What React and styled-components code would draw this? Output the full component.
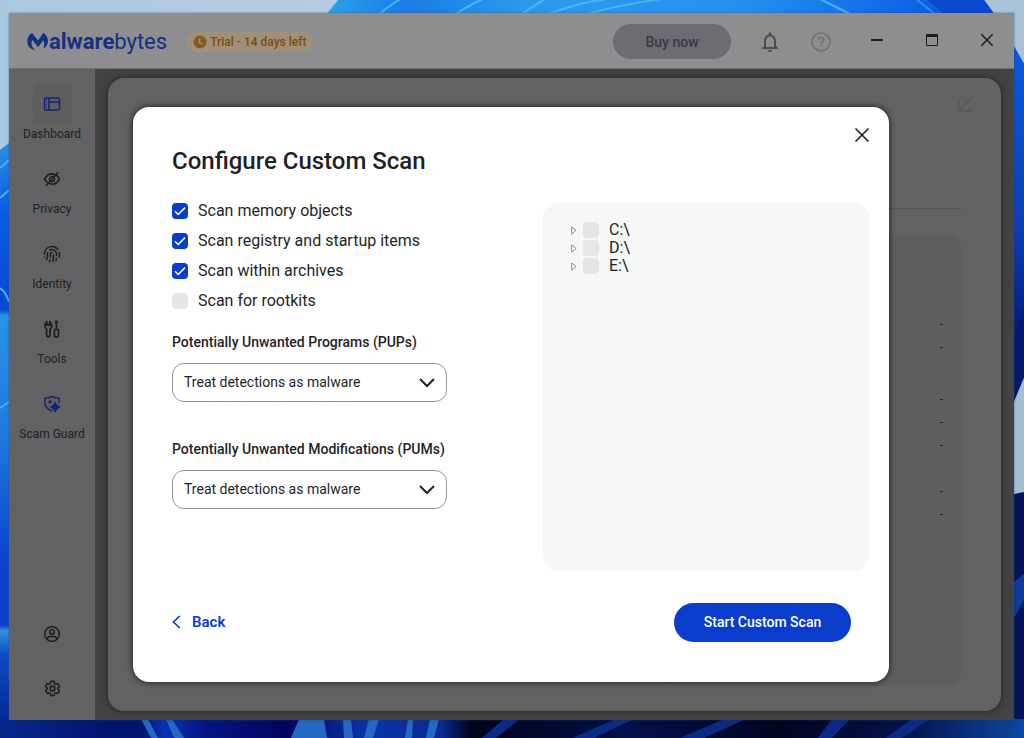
import { useState } from 'react';
import styled, { createGlobalStyle } from 'styled-components';
import { MdNotificationsNone } from 'react-icons/md';
import { HiOutlineCog6Tooth } from 'react-icons/hi2';
import { Fingerprint } from 'lucide-react';

const scanOptions = [
    { id: 'memory', label: 'Scan memory objects', checked: true },
    { id: 'registry', label: 'Scan registry and startup items', checked: true },
    { id: 'archives', label: 'Scan within archives', checked: true },
    { id: 'rootkits', label: 'Scan for rootkits', checked: false },
]

const drives = ['C:\\', 'D:\\', 'E:\\']

const summaryGroups = [['-', '-'], ['-', '-', '-'], ['-', '-']]

const Wallpaper = () => (
    <WallpaperSvg viewBox="0 0 1024 738" preserveAspectRatio="none" aria-hidden="true">
        <defs>
            <linearGradient id="sky" x1="0" y1="0" x2="1" y2="0">
                <stop offset="0" stopColor="#a9c9e2" />
                <stop offset="0.3" stopColor="#b4cbe0" />
                <stop offset="1" stopColor="#a9c2d8" />
            </linearGradient>
            <linearGradient id="bloom" x1="0" y1="0" x2="1" y2="0">
                <stop offset="0" stopColor="#2fa4ea" />
                <stop offset="0.12" stopColor="#1c7be4" />
                <stop offset="0.3" stopColor="#2b9bee" />
                <stop offset="0.6" stopColor="#2490ee" />
                <stop offset="0.85" stopColor="#0f62e8" />
                <stop offset="1" stopColor="#0a45c4" />
            </linearGradient>
            <linearGradient id="leftEdge" x1="0" y1="0" x2="0" y2="1">
                <stop offset="0" stopColor="#2b8fe8" />
                <stop offset="0.12" stopColor="#0a5be4" />
                <stop offset="0.28" stopColor="#0648d6" />
                <stop offset="0.29" stopColor="#2b93e4" />
                <stop offset="0.5" stopColor="#1c78e0" />
                <stop offset="0.7" stopColor="#0a44d0" />
                <stop offset="0.81" stopColor="#0840cc" />
                <stop offset="0.82" stopColor="#2f90da" />
                <stop offset="0.86" stopColor="#0c4cc8" />
                <stop offset="1" stopColor="#04208a" />
            </linearGradient>
            <linearGradient id="rightEdge" x1="0" y1="0" x2="0" y2="1">
                <stop offset="0" stopColor="#0b5ae0" />
                <stop offset="0.6" stopColor="#0a3db4" />
                <stop offset="1" stopColor="#02146c" />
            </linearGradient>
            <linearGradient id="floor" x1="0" y1="0" x2="1" y2="0">
                <stop offset="0" stopColor="#06288c" />
                <stop offset="0.1" stopColor="#021470" />
                <stop offset="0.14" stopColor="#021470" />
                <stop offset="0.16" stopColor="#0632b4" />
                <stop offset="0.2" stopColor="#031684" />
                <stop offset="0.28" stopColor="#02045c" />
                <stop offset="0.36" stopColor="#0a34a8" />
                <stop offset="0.43" stopColor="#0a2a92" />
                <stop offset="0.46" stopColor="#01041c" />
                <stop offset="0.62" stopColor="#02104a" />
                <stop offset="0.76" stopColor="#010420" />
                <stop offset="0.88" stopColor="#02124a" />
                <stop offset="1" stopColor="#0c48a0" />
            </linearGradient>
        </defs>
        <rect width="1024" height="738" fill="url(#sky)" />
        <path d="M322 20L338 0H984C996 16 1008 36 1024 64V340L1014 362V20Z" fill="url(#bloom)" />
        <g stroke="#4ab6f0" strokeWidth="2" fill="none">
            <path d="M375 18Q388 6 402 -2M450 18Q470 4 486 -2M515 18L545 -1M540 18Q570 4 606 -1M575 18Q610 6 662 -1" />
            <path d="M820 -1L858 18" />
        </g>
        <path d="M916 -1L940 18" stroke="#2c8cf0" strokeWidth="2" />
        <path d="M928 0H984L996 16H946Z" fill="#0a49cf" />
        <path d="M1014 46L1024 64V332L1014 360Z" fill="url(#rightEdge)" />
        <path d="M1014 335L1024 308V378L1014 402Z" fill="#021a6c" />
        <path d="M1014 402L1024 378V492H1014Z" fill="#a4bfd3" />
        <path d="M1014 494L1024 492V738H1014Z" fill="#03145a" />
        <path d="M1014 582L1024 574V600L1014 618Z" fill="#0c3ba0" />
        <path d="M0 150L9 143V738H0Z" fill="url(#leftEdge)" />
        <path d="M0 168L9 160M0 198L9 190M0 288Q6 292 9 302M0 408L9 402" stroke="#46b4f0" strokeWidth="2" fill="none" />
        <rect y="719" width="1024" height="19" fill="url(#floor)" />
        <g fill="#2468c2">
            <path d="M141 719H148L158 738H151ZM166 719H172L184 738H174Z" />
            <path d="M299 719H324L327 738H291ZM343 719H351L353 738H344ZM369 719H379L373 738H364ZM408 719H413L412 738H405ZM430 719H439L434 738H426Z" />
        </g>
        <path d="M504 719H520L496 738H482ZM616 719H634L594 738H572ZM724 719H746L704 738H680ZM832 719H850L832 738H818ZM912 719H930L902 738H886Z" fill="#0c2a84" />
    </WallpaperSvg>
)

const BrandMark = () => (
    <svg width="22" height="20" viewBox="0 0 22 20" fill="currentColor" aria-hidden="true">
        <path d="M5 .8C2 3 .3 6 .3 9.500c0 4.700 3.500 8 8.700 9-3-1.800-4.500-4.200-4.500-7 0-1.500.3-2.500 1-3.500l5.500 7.200 5.300-7c1.300 2.700 1.200 5.500.2 8.300 2.800-1.500 4.500-4.300 4.500-7.500C21 5.500 19 2.500 16.500.8L11 8.500z" />
    </svg>
)

const ClockIcon = () => (
    <svg width="14" height="14" viewBox="0 0 14 14" aria-hidden="true">
        <circle cx="7" cy="7" r="6.500" fill="#85591d" />
        <path d="M6.500 3.200v4.200l3 1.800" fill="none" stroke="#a39278" strokeWidth="1.500" />
    </svg>
)

const HelpIcon = () => (
    <svg width="20" height="20" viewBox="0 0 20 20" fill="none" stroke="currentColor" strokeWidth="1.500" aria-hidden="true">
        <circle cx="10" cy="10" r="9" />
        <path d="M7.400 8.100c0-1.500 1.100-2.500 2.600-2.500s2.600 1 2.600 2.400c0 1.900-2.500 2-2.500 4.100M10.100 13.300v1.700" />
    </svg>
)

const MinimizeIcon = () => (
    <svg width="14" height="14" viewBox="0 0 14 14" aria-hidden="true">
        <path d="M1 7h12" stroke="currentColor" strokeWidth="2" />
    </svg>
)

const MaximizeIcon = () => (
    <svg width="14" height="14" viewBox="0 0 14 14" fill="none" stroke="currentColor" aria-hidden="true">
        <path d="M1.500 2v10.500h11V2" />
        <path d="M1 2.500h12" strokeWidth="3" />
    </svg>
)

const CrossIcon = ({ size = 14 }) => (
    <svg width={size} height={size} viewBox="0 0 14 14" aria-hidden="true">
        <path d="M1.300 1.300l11.400 11.400M12.700 1.300L1.300 12.700" stroke="currentColor" strokeWidth="1.500" />
    </svg>
)

const DashboardIcon = () => (
    <svg width="18" height="14" viewBox="0 0 18 14" fill="none" stroke="currentColor" strokeWidth="1.500" aria-hidden="true">
        <rect x="1.500" y="1" width="15" height="12" rx="1.500" />
        <path d="M6 1v12M6 5h10.500" />
        <path d="M3.500 3v8" strokeWidth="1" strokeDasharray="1 1" />
    </svg>
)

const PrivacyIcon = () => (
    <svg width="18" height="18" viewBox="0 0 18 18" fill="none" stroke="currentColor" strokeWidth="1.600" strokeLinecap="round" aria-hidden="true">
        <path d="M11.600 4.300C7.600 3 3.700 5 1.500 9c.8 1.400 1.700 2.500 2.700 3.300M13.900 5.700c1 .8 1.900 1.900 2.600 3.300-2.200 4-6 6-9.700 4.800" />
        <path d="M10.200 6.600C7.800 6 6 7.900 6.600 10M11.400 8.300c.3 1.800-.9 3.300-2.700 3.300M15 2.500L3.200 15.500" />
    </svg>
)

const ToolsIcon = () => (
    <svg width="16" height="18" viewBox="0 0 16 18" fill="none" stroke="currentColor" strokeWidth="1.700" strokeLinejoin="round" aria-hidden="true">
        <path d="M2.600 9.200V15a1.700 1.700 0 003.400 0V9.200C7.300 8.400 8 7 7.600 5.300 7.300 3.300 6.600 2.200 5.800 1.600v3.600H2.900V1.600C1.800 2.400 1 3.700.9 5.300c-.1 1.600.5 3.100 1.700 3.900z" />
        <path d="M10.400 9.500h4V15a2 2 0 01-4 0zM12.400 9.500V4.500M12.400 4.300l-.8-2.900h1.600z" />
    </svg>
)

const ScamGuardIcon = () => (
    <svg width="18" height="18" viewBox="0 0 18 18" fill="none" stroke="currentColor" strokeWidth="1.500" aria-hidden="true">
        <path d="M9.300 16.200C4.500 14.500 2 11.500 2 7.500V3c2.500.2 4.700-.3 7-1.700 2.300 1.400 4.500 1.900 7 1.700v5.200" />
        <path d="M12.200 6.200q1.600 4.200 5.600 5.800-4 1.600-5.600 5.600-1.600-4-5.600-5.600 4-1.600 5.600-5.800zM7 4.200l.8 1.900 1.900.8-1.900.8L7 9.600l-.8-1.900-1.900-.8 1.900-.8z" fill="currentColor" stroke="none" />
    </svg>
)

const AccountIcon = () => (
    <svg width="18" height="18" viewBox="0 0 18 18" fill="none" stroke="currentColor" strokeWidth="1.500" aria-hidden="true">
        <circle cx="9" cy="9" r="7.300" />
        <circle cx="9" cy="6.900" r="2.200" />
        <path d="M4.500 14.300v-.7c0-1.300 1-2.100 2.200-2.100h4.600c1.200 0 2.200.8 2.200 2.100v.7" />
    </svg>
)

const CollapseIcon = () => (
    <svg width="16" height="16" viewBox="0 0 16 16" fill="none" stroke="currentColor" strokeWidth="1.500" aria-hidden="true">
        <path d="M15 1L1.500 14.500M1 3v12h12" />
    </svg>
)

const CheckBox = (props) => (
    <CheckWrap>
        <CheckInput type="checkbox" {...props} />
        <svg width="16" height="16" viewBox="0 0 16 16" fill="none" stroke="#fff" strokeWidth="1.500" aria-hidden="true">
            <path d="M3 8.300l3.200 3.200L13 4.600" />
        </svg>
    </CheckWrap>
)

const DetectionSelect = ({ id, label }) => (
    <Field>
        <FieldLabel htmlFor={id}>{label}</FieldLabel>
        <SelectWrap>
            <Select id={id} defaultValue="malware">
                <option value="malware">Treat detections as malware</option>
            </Select>
            <svg width="16" height="10" viewBox="0 0 16 10" fill="none" stroke="#22222c" strokeWidth="2" aria-hidden="true">
                <path d="M1 1l7 7 7-7" />
            </svg>
        </SelectWrap>
    </Field>
)

const navItems = [
    { label: 'Dashboard', icon: <DashboardIcon />, active: true, blue: true },
    { label: 'Privacy', icon: <PrivacyIcon /> },
    { label: 'Identity', icon: <Fingerprint size={18} strokeWidth={2} /> },
    { label: 'Tools', icon: <ToolsIcon /> },
    { label: 'Scam Guard', icon: <ScamGuardIcon />, blue: true },
]

const App = () => {
    const [options, setOptions] = useState(scanOptions)

    const toggleOption = (id) => {
        setOptions(options.map(o => o.id === id ? { ...o, checked: !o.checked } : o))
    }

    return (
        <>
            <GlobalStyle />
            <Desktop>
                <Wallpaper />
                <Window>
                    <TitleBar>
                        <Brand>
                            <BrandMark />
                            <span><b>alware</b>bytes</span>
                        </Brand>
                        <TrialBadge>
                            <ClockIcon />
                            Trial - 14 days left
                        </TrialBadge>
                        <TitleActions>
                            <BuyButton type="button">Buy now</BuyButton>
                            <ToolButton type="button" aria-label="Notifications" $color="#4c4c4f"><MdNotificationsNone size={24} /></ToolButton>
                            <ToolButton type="button" aria-label="Help" $color="#717174"><HelpIcon /></ToolButton>
                        </TitleActions>
                        <WindowControls>
                            <WindowButton type="button" aria-label="Minimize"><MinimizeIcon /></WindowButton>
                            <WindowButton type="button" aria-label="Maximize"><MaximizeIcon /></WindowButton>
                            <WindowButton type="button" aria-label="Close"><CrossIcon /></WindowButton>
                        </WindowControls>
                    </TitleBar>

                    <Body>
                        <Sidebar>
                            {navItems.map(item => (
                                <NavItem key={item.label} href="#" $blue={item.blue}>
                                    <IconTile $active={item.active}>{item.icon}</IconTile>
                                    <NavLabel>{item.label}</NavLabel>
                                </NavItem>
                            ))}
                            <SidebarBottom>
                                <NavItem href="#" aria-label="Account"><IconTile><AccountIcon /></IconTile></NavItem>
                                <NavItem href="#" aria-label="Settings"><IconTile><HiOutlineCog6Tooth size={19} strokeWidth={2} /></IconTile></NavItem>
                            </SidebarBottom>
                        </Sidebar>

                        <Content>
                            <Panel>
                                <PanelHead><CollapseIcon /></PanelHead>
                                <SummaryCard>
                                    {summaryGroups.map((group, ind) => (
                                        <SummaryGroup key={ind}>
                                            {group.map((value, i) => <SummaryRow key={i}>{value}</SummaryRow>)}
                                        </SummaryGroup>
                                    ))}
                                </SummaryCard>
                            </Panel>
                        </Content>
                    </Body>

                    <Overlay>
                        <Dialog role="dialog" aria-labelledby="dialog-title">
                            <DialogHead>
                                <DialogTitle id="dialog-title">Configure Custom Scan</DialogTitle>
                                <CloseButton type="button" aria-label="Close dialog"><CrossIcon size={16} /></CloseButton>
                            </DialogHead>

                            <DialogBody>
                                <Settings>
                                    <OptionList>
                                        {options.map(option => (
                                            <Option key={option.id}>
                                                <CheckBox checked={option.checked} onChange={() => toggleOption(option.id)} />
                                                {option.label}
                                            </Option>
                                        ))}
                                    </OptionList>
                                    <Fields>
                                        <DetectionSelect id="pups" label="Potentially Unwanted Programs (PUPs)" />
                                        <DetectionSelect id="pums" label="Potentially Unwanted Modifications (PUMs)" />
                                    </Fields>
                                </Settings>

                                <DriveTree>
                                    {drives.map(drive => (
                                        <Drive key={drive}>
                                            <svg width="6" height="9" viewBox="0 0 6 9" fill="#fff" stroke="#8a8a8e" aria-hidden="true">
                                                <path d="M.7.900v7.200L5 4.500z" />
                                            </svg>
                                            <Option>
                                                <CheckBox />
                                                {drive}
                                            </Option>
                                        </Drive>
                                    ))}
                                </DriveTree>
                            </DialogBody>

                            <DialogFooter>
                                <BackButton type="button">
                                    <svg width="9" height="14" viewBox="0 0 9 14" fill="none" stroke="currentColor" strokeWidth="1.700" aria-hidden="true">
                                        <path d="M7.800 1L1.500 7l6.300 6" />
                                    </svg>
                                    Back
                                </BackButton>
                                <StartButton type="button">Start Custom Scan</StartButton>
                            </DialogFooter>
                        </Dialog>
                    </Overlay>
                </Window>
            </Desktop>
        </>
    )
}

export default App


const GlobalStyle = createGlobalStyle`
    * {
        box-sizing: border-box;
    }
    body {
        margin: 0;
        font-family: Roboto, "Liberation Sans", sans-serif;
    }
    button {
        border: 0;
        padding: 0;
        background: none;
        font-family: inherit;
        cursor: pointer;
    }
    svg {
        display: block;
        flex-shrink: 0;
    }
`

const Desktop = styled.div`
    position: relative;
    display: flex;
    min-height: 100vh;
    padding: 13px 10px 18px 9px;
    overflow: hidden;
`

const WallpaperSvg = styled.svg`
    position: absolute;
    inset: 0;
    width: 100%;
    height: 100%;
`

const Window = styled.div`
    position: relative;
    flex: 1;
    display: flex;
    flex-direction: column;
    background-color: #434345;
    box-shadow: 0 0 2px rgba(60, 60, 60, 0.6);
`

const TitleBar = styled.header`
    display: flex;
    align-items: center;
    height: 56px;
    padding: 2px 0 0 18px;
    background-color: #8e8e90;
    border-bottom: 1px solid #747476;
`

const Brand = styled.div`
    display: flex;
    align-items: center;
    color: #15307e;
    font-size: 22px;
    line-height: 24px;
    b {
        font-weight: 700;
    }
`

const TrialBadge = styled.div`
    display: flex;
    align-items: center;
    gap: 3px;
    height: 20px;
    margin-left: 19px;
    padding: 0 7px;
    border-radius: 10px;
    background-color: #a19079;
    color: #7d4c08;
    font-size: 12px;
    font-weight: 500;
    white-space: nowrap;
`

const TitleActions = styled.div`
    display: flex;
    align-items: center;
    gap: 11px;
    margin-left: auto;
`

const BuyButton = styled.button`
    width: 118px;
    height: 35px;
    margin-right: 8px;
    border-radius: 18px;
    background-color: #6d6c72;
    color: #393743;
    font-size: 14px;
    font-weight: 500;
`

const ToolButton = styled.button`
    display: flex;
    align-items: center;
    justify-content: center;
    width: 40px;
    height: 40px;
    color: ${props => props.$color};
`

const WindowControls = styled.div`
    display: flex;
    align-self: stretch;
    margin-left: 8px;
    padding-bottom: 4px;
`

const WindowButton = styled.button`
    display: flex;
    align-items: center;
    justify-content: center;
    width: 55px;
    color: #1c1c1f;
`

const Body = styled.div`
    flex: 1;
    display: flex;
`

const Sidebar = styled.nav`
    display: flex;
    flex-direction: column;
    gap: 14px;
    width: 86px;
    padding: 15px 0 12px;
    background-color: #626264;
`

const NavItem = styled.a`
    display: flex;
    flex-direction: column;
    align-items: center;
    color: ${props => props.$blue ? '#16236f' : '#1e1e21'};
    text-decoration: none;
`

const IconTile = styled.span`
    display: flex;
    align-items: center;
    justify-content: center;
    width: 39px;
    height: 39px;
    border-radius: 8px;
    background-color: ${props => props.$active ? '#5e5e61' : 'transparent'};
`

const NavLabel = styled.span`
    color: #1e1e21;
    font-size: 12px;
    line-height: 22px;
`

const SidebarBottom = styled.div`
    display: flex;
    flex-direction: column;
    gap: 16px;
    margin-top: auto;
`

const Content = styled.main`
    flex: 1;
    display: flex;
    padding: 9px 13px 9px 13px;
`

const Panel = styled.section`
    flex: 1;
    display: flex;
    flex-direction: column;
    padding: 18px 39px 25px;
    border-radius: 16px;
    background-color: #626264;
    box-shadow: 0 0 7px rgba(0, 0, 0, 0.5);
`

const PanelHead = styled.div`
    display: flex;
    justify-content: flex-end;
    align-items: flex-start;
    height: 113px;
    margin: 0 0 25px;
    border-bottom: 1px solid #555557;
    color: #58585a;
    svg {
        margin-right: -12px;
    }
`

const SummaryCard = styled.aside`
    flex: 1;
    align-self: flex-end;
    width: 300px;
    padding: 67px 15px 0;
    border-radius: 16px;
    background-color: #5e5e60;
`

const SummaryGroup = styled.div`
    padding: 12px 4px 10px;
    & + & {
        border-top: 1px solid #5b5b5d;
    }
    &:first-child {
        padding-bottom: 16px;
    }
`

const SummaryRow = styled.div`
    color: #1e1e21;
    font-size: 12px;
    line-height: 23px;
    text-align: right;
`

const Overlay = styled.div`
    position: absolute;
    inset: 0;
    display: flex;
    padding: 94px 125px 38px 124px;
`

const Dialog = styled.div`
    flex: 1;
    display: flex;
    flex-direction: column;
    padding: 12px 11px 40px 39px;
    border-radius: 16px;
    background-color: #fff;
    color: #1f1f26;
    box-shadow: 0 0 6px rgba(0, 0, 0, 0.8);
`

const DialogHead = styled.div`
    display: flex;
    justify-content: space-between;
    align-items: flex-start;
`

const DialogTitle = styled.h1`
    margin: 26px 0 0;
    font-size: 24px;
    font-weight: 500;
    line-height: 32px;
`

const CloseButton = styled.button`
    display: flex;
    align-items: center;
    justify-content: center;
    width: 32px;
    height: 32px;
    color: #222226;
`

const DialogBody = styled.div`
    flex: 1;
    display: flex;
    justify-content: space-between;
    margin: 25px 9px 32px 0;
`

const Settings = styled.div`
    width: 275px;
`

const OptionList = styled.div`
    display: flex;
    flex-direction: column;
    gap: 12px;
`

const Option = styled.label`
    display: flex;
    align-items: center;
    gap: 10px;
    font-size: 16px;
    line-height: 18px;
`

const CheckWrap = styled.span`
    display: grid;
    > * {
        grid-area: 1 / 1;
    }
    svg {
        visibility: hidden;
        pointer-events: none;
    }
    input:checked + svg {
        visibility: visible;
    }
`

const CheckInput = styled.input`
    appearance: none;
    width: 16px;
    height: 16px;
    margin: 0;
    border-radius: 4px;
    background-color: #e5e6e8;
    &:checked {
        background-color: #0a3dcc;
    }
`

const Fields = styled.div`
    display: flex;
    flex-direction: column;
    gap: 37px;
    margin-top: 22px;
`

const Field = styled.div`
    display: flex;
    flex-direction: column;
    gap: 11px;
`

const FieldLabel = styled.label`
    font-size: 14px;
    font-weight: 500;
    line-height: 20px;
`

const SelectWrap = styled.div`
    display: grid;
    align-items: center;
    > * {
        grid-area: 1 / 1;
    }
    svg {
        justify-self: end;
        margin-right: 12px;
        pointer-events: none;
    }
`

const Select = styled.select`
    appearance: none;
    width: 100%;
    height: 39px;
    padding: 0 36px 2px 11px;
    border: 1px solid #9191a0;
    border-radius: 12px;
    background-color: #fff;
    color: #1f1f26;
    font-family: inherit;
    font-size: 14px;
`

const DriveTree = styled.div`
    width: 326px;
    padding: 19px 28px;
    border-radius: 16px;
    background-color: #f5f8f7;
`

const Drive = styled.div`
    display: flex;
    align-items: center;
    gap: 6px;
`

const DialogFooter = styled.div`
    display: flex;
    justify-content: space-between;
    align-items: center;
    padding-right: 27px;
`

const BackButton = styled.button`
    display: flex;
    align-items: center;
    gap: 11px;
    padding-bottom: 2px;
    color: #0a3dcc;
    font-size: 15px;
    font-weight: 600;
`

const StartButton = styled.button`
    width: 177px;
    height: 39px;
    padding-bottom: 2px;
    border-radius: 20px;
    background-color: #0a3dcc;
    color: #fff;
    font-size: 14px;
    font-weight: 500;
`
